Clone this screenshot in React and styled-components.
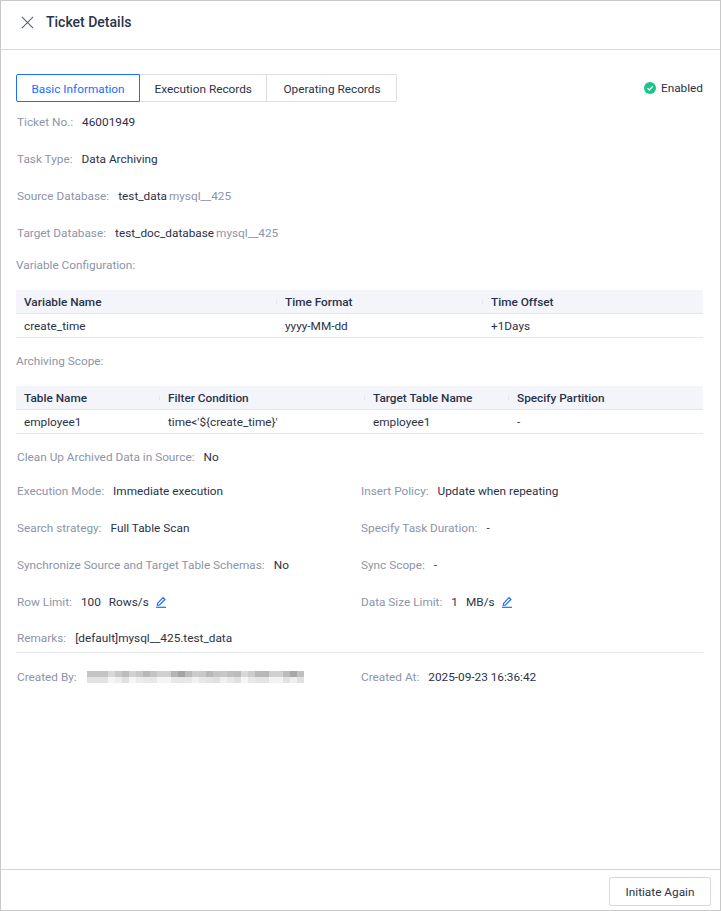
import React from "react";
import styled, { createGlobalStyle } from "styled-components";

const GlobalStyle = createGlobalStyle`
  html, body {
    margin: 0;
    padding: 0;
    background: #fff;
  }
  body {
    font-family: Roboto, "Noto Sans", sans-serif;
    font-size: 11.8px;
    color: #2a3248;
  }
`;

const blurTop = ["c4","c4","c4","d8","c8","bc","d2","c8","b8","c4","d0","d0","b4","a4","bc","cc","c8","b8","c4","c8","c0","bc","d8","cc","b8","b8","d0","d0","bc","a8","c0"];
const blurBottom = ["e2","e2","e2","f5","ee","e0","f5","ec","e8","e8","f4","f4","e8","e6","e8","f2","e8","e4","e0","f0","e8","e0","f6","e8","e4","e4","f2","f2","e2","ee","e0"];

const Drawer = () => {
  return (
    <>
      <GlobalStyle />
      <Page>
        <Header>
          <CloseIcon viewBox="0 0 14 14">
            <path d="M1 1 L13 13 M13 1 L1 13" />
          </CloseIcon>
          <Title>Ticket Details</Title>
        </Header>
        <Body>
          <TabRow>
            <Tabs>
              <Tab $active>Basic Information</Tab>
              <Tab>Execution Records</Tab>
              <Tab>Operating Records</Tab>
            </Tabs>
            <Status>
              <svg width="12" height="12" viewBox="0 0 12 12">
                <circle cx="6" cy="6" r="6" fill="#1bc48a" />
                <path d="M3.4 6.1 L5.3 8 L8.7 4.4" fill="none" stroke="#fff" strokeWidth="1.3" />
              </svg>
              Enabled
            </Status>
          </TabRow>

          <Field>
            <Label>Ticket No.:</Label>
            <Value>46001949</Value>
          </Field>
          <Field>
            <Label>Task Type:</Label>
            <Value>Data Archiving</Value>
          </Field>
          <Field>
            <Label>Source Database:</Label>
            <Value>test_data</Value>
            <Instance>mysql__425</Instance>
          </Field>
          <Field>
            <Label>Target Database:</Label>
            <Value>test_doc_database</Value>
            <Instance>mysql__425</Instance>
          </Field>
          <SectionLabel>Variable Configuration:</SectionLabel>

          <Table $cols="261px 206px 1fr">
            <HeadCell>Variable Name</HeadCell>
            <HeadCell>Time Format</HeadCell>
            <HeadCell $last>Time Offset</HeadCell>
            <Cell>create_time</Cell>
            <Cell>yyyy-MM-dd</Cell>
            <Cell>+1Days</Cell>
          </Table>

          <SectionLabel $gap>Archiving Scope:</SectionLabel>

          <Table $cols="144px 205px 144px 1fr">
            <HeadCell>Table Name</HeadCell>
            <HeadCell>Filter Condition</HeadCell>
            <HeadCell>Target Table Name</HeadCell>
            <HeadCell $last>Specify Partition</HeadCell>
            <Cell>employee1</Cell>
            <Cell>time&lt;'${"{"}create_time{"}"}'</Cell>
            <Cell>employee1</Cell>
            <Cell>-</Cell>
          </Table>

          <CleanRow>
            <Label>Clean Up Archived Data in Source:</Label>
            <Value>No</Value>
          </CleanRow>

          <Columns>
            <ShortField>
              <Label>Execution Mode:</Label>
              <Value>Immediate execution</Value>
            </ShortField>
            <ShortField>
              <Label>Insert Policy:</Label>
              <Value>Update when repeating</Value>
            </ShortField>
            <Field>
              <Label>Search strategy:</Label>
              <Value>Full Table Scan</Value>
            </Field>
            <Field>
              <Label>Specify Task Duration:</Label>
              <Value>-</Value>
            </Field>
            <Field>
              <Label>Synchronize Source and Target Table Schemas:</Label>
              <Value>No</Value>
            </Field>
            <Field>
              <Label>Sync Scope:</Label>
              <Value>-</Value>
            </Field>
            <Field>
              <Label>Row Limit:</Label>
              <Value>100</Value>
              <Unit>Rows/s</Unit>
              <EditIcon />
            </Field>
            <Field>
              <Label>Data Size Limit:</Label>
              <Value>1</Value>
              <Unit>MB/s</Unit>
              <EditIcon />
            </Field>
          </Columns>

          <RemarkRow>
            <Label>Remarks:</Label>
            <Value>[default]mysql__425.test_data</Value>
          </RemarkRow>

          <Columns>
            <Field>
              <Label>Created By:</Label>
              <Mosaic />
            </Field>
            <Field>
              <Label>Created At:</Label>
              <Value>2025-09-23 16:36:42</Value>
            </Field>
          </Columns>
        </Body>
        <Footer>
          <FooterButton>Initiate Again</FooterButton>
        </Footer>
      </Page>
    </>
  );
};

const EditIcon = () => (
  <EditSvg viewBox="0 0 12 12">
    <path d="M2.6 7.4 L8 1.7 L9.9 3.5 L4.5 9 L2.4 9.3 Z" />
    <path d="M1 11.3 H11" />
  </EditSvg>
);

const Mosaic = () => (
  <MosaicSvg viewBox="0 0 217 12">
    {blurTop.map((c, i) => (
      <rect key={i} x={i * 7} y="0" width="7" height="6" fill={`#${c}${c}${c}`} />
    ))}
    {blurBottom.map((c, i) => (
      <rect key={i} x={i * 7} y="6" width="7" height="6" fill={`#${c}${c}${c}`} />
    ))}
  </MosaicSvg>
);

const Page = styled.div`
  width: 721px;
  height: 911px;
  box-sizing: border-box;
  border: 1px solid #c8c8c8;
  display: flex;
  flex-direction: column;
  overflow: hidden;
`;

const Header = styled.header`
  height: 49px;
  flex: none;
  box-sizing: border-box;
  display: flex;
  align-items: center;
  gap: 12px;
  padding: 0 0 6px 20px;
  border-bottom: 1px solid #d5d8e2;
`;

const CloseIcon = styled.svg`
  width: 13px;
  height: 13px;
  fill: none;
  stroke: #5d6579;
  stroke-width: 1.2;
`;

const Title = styled.h1`
  margin: 0;
  font-size: 14px;
  font-weight: 500;
  color: #2a3248;
`;

const Body = styled.main`
  flex: 1;
  padding: 24px 17px 0 15px;
`;

const TabRow = styled.div`
  display: flex;
  align-items: center;
  justify-content: space-between;
`;

const Tabs = styled.div`
  display: flex;
`;

const Tab = styled.div`
  height: 28px;
  box-sizing: border-box;
  padding: 1px 14.5px 0;
  display: flex;
  align-items: center;
  border: 1px solid ${(p) => (p.$active ? "#1a6dff" : "#dcdee6")};
  margin-right: -1px;
  color: ${(p) => (p.$active ? "#1a6dff" : "#2a3248")};
  position: relative;
  z-index: ${(p) => (p.$active ? 1 : 0)};
  &:first-child {
    border-radius: 2px 0 0 2px;
  }
  &:last-child {
    border-radius: 0 2px 2px 0;
    margin-right: 0;
    padding: 1px 16px 0;
  }
`;

const Status = styled.div`
  display: flex;
  align-items: center;
  gap: 5px;
`;

const Field = styled.div`
  height: 37px;
  padding: 2px 0 0 1px;
  box-sizing: border-box;
  display: flex;
  align-items: center;
  white-space: nowrap;
`;

const ShortField = styled(Field)`
  height: 36px;
`;

const CleanRow = styled(Field)`
  margin-top: 3px;
  margin-bottom: -2px;
`;

const Label = styled.span`
  color: #8d94a8;
  margin-right: 9px;
`;

const Value = styled.span`
  color: #2a3248;
`;

const Instance = styled.span`
  color: #8d94a8;
  margin-left: 2px;
`;

const Unit = styled.span`
  color: #2a3248;
  margin-left: 8px;
`;

const EditSvg = styled.svg`
  width: 12px;
  height: 12px;
  margin-left: 6px;
  fill: none;
  stroke: #1a6dff;
  stroke-width: 1.2;
`;

const MosaicSvg = styled.svg`
  width: 217px;
  height: 12px;
  margin: 1px 0 0 1px;
`;

const SectionLabel = styled.div`
  color: #8d94a8;
  height: 37px;
  box-sizing: border-box;
  padding-bottom: 2px;
  margin-top: ${(p) => (p.$gap ? 5 : -3)}px;
  display: flex;
  align-items: center;
`;

const Table = styled.div`
  display: grid;
  grid-template-columns: ${(p) => p.$cols};
  margin-top: 6px;
`;

const HeadCell = styled.div`
  height: 24px;
  box-sizing: border-box;
  padding: 1px 0 0 8px;
  display: flex;
  align-items: center;
  font-weight: 500;
  background: #f3f5fb;
  border-bottom: 1px solid #e3e6ef;
  position: relative;
  &::after {
    content: "";
    display: ${(p) => (p.$last ? "none" : "block")};
    position: absolute;
    right: 0;
    top: 10px;
    width: 1px;
    height: 4px;
    background: #e3e6ef;
  }
`;

const Cell = styled.div`
  height: 24px;
  box-sizing: border-box;
  padding: 1px 0 0 8px;
  display: flex;
  align-items: center;
  border-bottom: 1px solid #e3e6ef;
`;

const Columns = styled.div`
  display: grid;
  grid-template-columns: 344px 1fr;
`;

const RemarkRow = styled.div`
  height: 34px;
  box-sizing: border-box;
  display: flex;
  align-items: center;
  padding: 5px 0 0 1px;
  border-bottom: 1px solid #e3e6ef;
  margin-bottom: 4px;
`;

const Footer = styled.footer`
  height: 41px;
  flex: none;
  box-sizing: border-box;
  border-top: 1px solid #d5d8e2;
  display: flex;
  align-items: center;
  justify-content: flex-end;
  padding: 3px 9px 0 0;
`;

const FooterButton = styled.button`
  width: 102px;
  height: 29px;
  padding: 1px 0 0;
  background: #fff;
  border: 1px solid #d5d8e2;
  border-radius: 2px;
  font: inherit;
  color: #2a3248;
`;

const App = () => <Drawer />;

export default App;
